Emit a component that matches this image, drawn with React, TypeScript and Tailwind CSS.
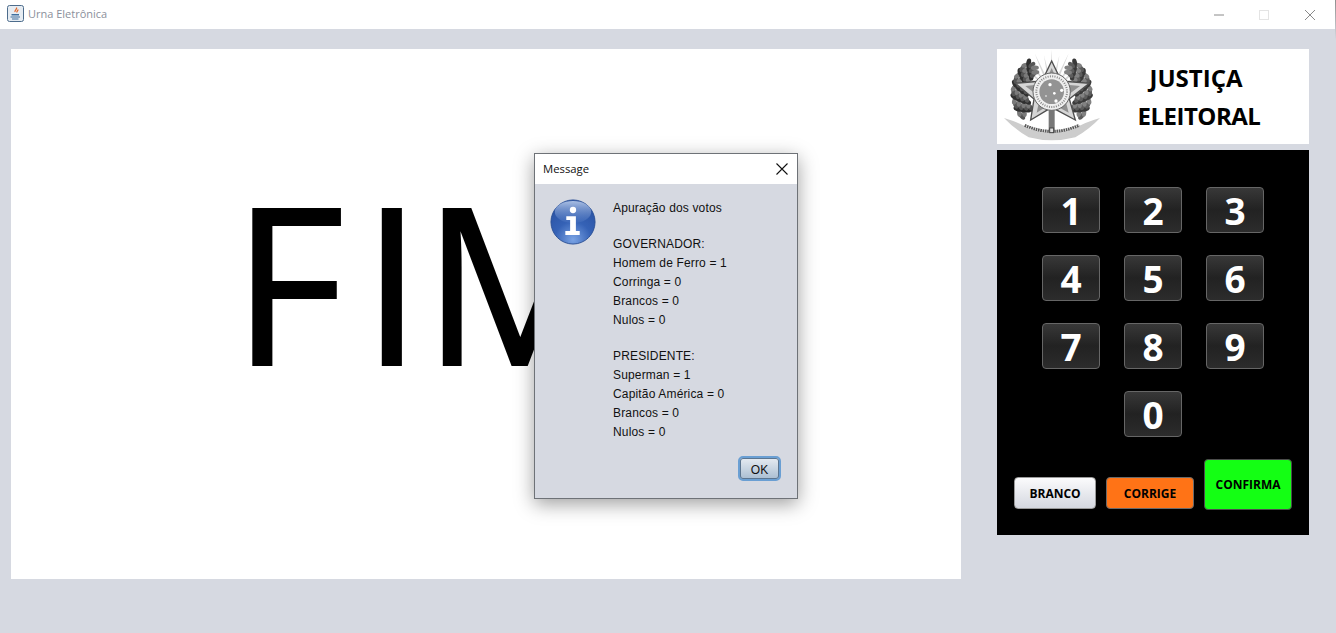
const keys = ["1", "2", "3", "4", "5", "6", "7", "8", "9"];

const results = [
  { head: "GOVERNADOR:", rows: ["Homem de Ferro = 1", "Corringa = 0", "Brancos = 0", "Nulos = 0"] },
  { head: "PRESIDENTE:", rows: ["Superman = 1", "Capitão América = 0", "Brancos = 0", "Nulos = 0"] },
];

function JavaIcon() {
  return (
    <svg className="mb-[2px]" width="17" height="17" viewBox="0 0 17 17">
      <rect x="0.5" y="0.5" width="16" height="16" rx="2" fill="#e6ecf2" stroke="#4d6c8c" />
      <path d="M9.5 2.5c1 1.5-2 2.5-1.5 4.500 M11 4.500c0 1.500-1.500 1.500-1 3" fill="none" stroke="#e2672a" strokeWidth="1.300" />
      <path d="M4.500 9h7.500v1.500h-7.500z M3.500 11.500h9.500v1h-9.500z M5 13.500h6.500v1h-6.500z" fill="#3f6f9e" />
    </svg>
  );
}

function InfoIcon() {
  return (
    <svg className="shrink-0" width="46" height="46" viewBox="0 0 48 48">
      <defs>
        <radialGradient id="infoBall" cx="50%" cy="90%" r="75%">
          <stop offset="0%" stopColor="#7aa3e4" />
          <stop offset="55%" stopColor="#3562b6" />
          <stop offset="100%" stopColor="#2c55a6" />
        </radialGradient>
        <linearGradient id="infoShine" x1="0" y1="0" x2="0" y2="1">
          <stop offset="0%" stopColor="#c9d9f2" stopOpacity="0.8" />
          <stop offset="100%" stopColor="#7fa2dc" stopOpacity="0.1" />
        </linearGradient>
      </defs>
      <circle cx="24" cy="24" r="23" fill="url(#infoBall)" stroke="#2a4f95" />
      <ellipse cx="24" cy="13.500" rx="19" ry="11.500" fill="url(#infoShine)" />
      <circle cx="24" cy="11.500" r="3.300" fill="#fff" />
      <path d="M17 18h10v15.500h4v4h-15v-4h5v-11.500h-4z" fill="#fff" />
    </svg>
  );
}

// coat of arms, drawn from the blurry grey one in the reference
function Emblem() {
  const leaves = Array.from({ length: 60 }, (_, i) => {
    const a = ((140 + (i / 59) * 96) * Math.PI) / 180;
    const r = 78 + ((i * 7) % 4) * 12;
    return { x: r * Math.cos(a), y: r * Math.sin(a), rot: (a * 180) / Math.PI + 50 + (i % 3) * 35 };
  });
  const rays = Array.from({ length: 13 }, (_, i) => (-162 + i * 12) * (Math.PI / 180));

  return (
    <svg width="110" height="94" viewBox="0 0 330 282" className="shrink-0 blur-[0.5px]">
      {rays.map((a, i) => (
        <path
          key={i}
          d={`M${155 + 40 * Math.cos(a - 0.09)} ${125 + 40 * Math.sin(a - 0.09)} L${155 + (i % 2 ? 112 : 126) * Math.cos(a)} ${125 + (i % 2 ? 112 : 126) * Math.sin(a)} L${155 + 40 * Math.cos(a + 0.09)} ${125 + 40 * Math.sin(a + 0.09)}z`}
          fill="#d8d8d8"
        />
      ))}
      {leaves.map((l, i) => (
        <g key={i}>
          <ellipse cx={155 + l.x} cy={128 + l.y} rx="12" ry="7" transform={`rotate(${l.rot} ${155 + l.x} ${128 + l.y})`} fill={["#2f2f2f", "#555555", "#7a7a7a"][i % 3]} />
          <ellipse cx={155 - l.x} cy={128 + l.y} rx="12" ry="7" transform={`rotate(${-l.rot} ${155 - l.x} ${128 + l.y})`} fill={["#3a3a3a", "#5c5c5c", "#828282"][i % 3]} />
        </g>
      ))}
      <path d="M155 33L184 93 268 100 208 147 226 210 155 172 92 210 102 147 46 100 126 93z" fill="#d6d6d6" stroke="#4f4f4f" strokeWidth="4" />
      <path d="M155 54L176 102 240 108 194 142 206 188 155 160 110 188 120 142 76 108 134 102z" fill="#909090" />
      <circle cx="155" cy="125" r="56" fill="#efefef" stroke="#666" strokeWidth="3" />
      <circle cx="155" cy="125" r="46" fill="none" stroke="#8a8a8a" strokeWidth="6" strokeDasharray="3 4" />
      <circle cx="155" cy="125" r="37" fill="#939393" />
      <g fill="#ffffff">
        <circle cx="150" cy="104" r="5" />
        <circle cx="185" cy="121" r="5" />
        <circle cx="163" cy="130" r="4" />
        <circle cx="168" cy="153" r="5" />
        <circle cx="138" cy="138" r="2.500" />
      </g>
      <rect x="146" y="180" width="18" height="60" fill="#777" />
      <path d="M12 204Q60 218 90 238 155 256 220 238 250 218 300 204 268 238 226 262 155 280 86 262 44 238 12 204z" fill="#cdcdcd" />
      <path d="M74 226Q155 262 238 226" fill="none" stroke="#5a5a5a" strokeWidth="9" strokeDasharray="5 2" />
      <rect x="149" y="234" width="12" height="14" fill="#ddd" stroke="#444" strokeWidth="3" />
    </svg>
  );
}

function NumKey({ label }: { label: string }) {
  return (
    <button className="flex h-[46px] w-[58px] items-center justify-center rounded-[4px] border border-[#666666] bg-gradient-to-b from-[#383838] via-[#222222] to-[#2c2c2c] font-['Open_Sans',sans-serif] text-[37px] leading-none font-bold text-white">
      {label}
    </button>
  );
}

function Dialog() {
  return (
    <div className="absolute top-[153px] left-[534px] flex h-[346px] w-[264px] flex-col border border-[#6e7277] bg-[#d6d9e1] font-['Liberation_Sans',sans-serif] text-[12px] text-[#111] shadow-[0_5px_18px_rgba(0,0,0,0.38)]">
      <div className="flex h-[30px] shrink-0 items-center justify-between bg-white pr-[9px] pl-[8px]">
        <span className="font-['Open_Sans',sans-serif] text-[11.3px]">Message</span>
        <svg width="12" height="12" viewBox="0 0 12 12" stroke="#111" strokeWidth="1.100">
          <path d="M0.500 0.500L11.500 11.500M11.500 0.500L0.500 11.500" />
        </svg>
      </div>
      <div className="flex flex-1 items-start pt-[15px] pl-[15px]">
        <InfoIcon />
        <div className="ml-[17px] leading-[19px] tracking-[0.16px]">
          <p>Apuração dos votos</p>
          {results.map((block) => (
            <div key={block.head} className="mt-[17px]">
              <p>{block.head}</p>
              {block.rows.map((row) => (
                <p key={row}>{row}</p>
              ))}
            </div>
          ))}
        </div>
      </div>
      <div className="flex justify-end pr-[16px] pb-[17px]">
        <button className="h-[25px] w-[43px] rounded-[5px] border-2 border-[#6a9fd3] bg-gradient-to-b from-[#e6ebf1] via-[#c8d5e2] to-[#a9bdd1] pt-[2px] text-[12px] text-[#111] shadow-[inset_0_0_0_1px_#5b7590]">
          OK
        </button>
      </div>
    </div>
  );
}

export default function App() {
  return (
    <div className="relative h-[633px] w-[1336px] overflow-hidden bg-[#d6d9e1]">
      <div className="flex h-[29px] items-center bg-white pl-[7px]">
        <JavaIcon />
        <span className="ml-[4px] font-['Open_Sans',sans-serif] text-[11px] text-[#8b909b]">Urna Eletrônica</span>
        <div className="ml-auto flex items-center pr-[21px]">
          <svg width="10" height="2" viewBox="0 0 10 2">
            <path d="M0 1h10" stroke="#8a8a8a" />
          </svg>
          <div className="ml-[35px] h-[10px] w-[10px] border border-[#e4e4e4]" />
          <svg className="ml-[36px]" width="10" height="10" viewBox="0 0 10 10">
            <path d="M0 0L10 10M10 0L0 10" stroke="#8a8a8a" />
          </svg>
        </div>
      </div>

      <div className="flex pt-[20px] pl-[11px]">
        <main className="h-[530px] w-[950px] overflow-hidden bg-white pt-[120px] pl-[221px]">
          <h1 className="whitespace-nowrap font-['Open_Sans',sans-serif] text-[218px] leading-[224px] font-normal text-black [-webkit-text-stroke:2px_black]">
            <span className="mr-[17px]">F</span>IM
          </h1>
        </main>

        <aside className="ml-[36px] w-[312px]">
          <div className="flex h-[95px] items-center bg-white pl-[3px]">
            <Emblem />
            <div className="ml-[14px] w-[150px] text-center font-['Open_Sans',sans-serif] text-[24px] leading-[38px] font-bold text-black">
              <p className="pr-[6px]">JUSTIÇA</p>
              <p className="tracking-[-0.5px]">ELEITORAL</p>
            </div>
          </div>

          <div className="mt-[6px] h-[385px] bg-black pt-[37px]">
            <div className="ml-[45px] grid w-[222px] grid-cols-3 gap-x-[24px] gap-y-[22px]">
              {keys.map((key) => (
                <NumKey key={key} label={key} />
              ))}
              <div className="col-start-2">
                <NumKey label="0" />
              </div>
            </div>

            <div className="mt-[22px] ml-[17px] flex items-end font-['Open_Sans',sans-serif] text-[12px] font-bold text-black">
              <button className="h-[32px] w-[82px] rounded-[4px] border border-[#9a9a9a] bg-gradient-to-b from-[#fbfbfc] to-[#d5d8e0] pt-[2px]">
                BRANCO
              </button>
              <button className="ml-[10px] h-[32px] w-[88px] rounded-[4px] border border-[#6a6a6a] bg-[#ff7316] pt-[2px]">CORRIGE</button>
              <button className="mb-[-1px] ml-[10px] h-[51px] w-[88px] rounded-[4px] border border-[#4c4c4c] bg-[#14ff14]">
                CONFIRMA
              </button>
            </div>
          </div>
        </aside>
      </div>

      <Dialog />
      <div className="absolute top-0 right-0 h-[40px] w-[1px] bg-gradient-to-b from-[#8f8f8f] to-[#d6d9e1]" />
    </div>
  );
}
